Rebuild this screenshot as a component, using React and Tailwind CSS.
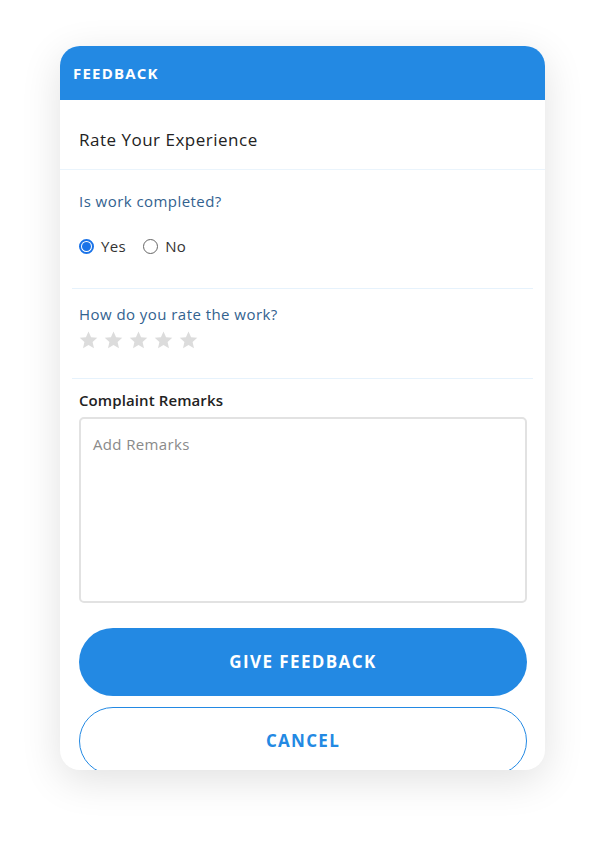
import React from "react";

function Star() {
  return (
    <svg width="21" height="20" viewBox="0 0 24 24" className="block">
      <path
        d="M12 1.8l3.1 6.9 7.4.7-5.6 5 1.7 7.4L12 17.9l-6.6 3.9 1.7-7.4-5.6-5 7.4-.7z"
        fill="#dcdcdc"
      />
    </svg>
  );
}

const font = "'Open Sans', 'Noto Sans', sans-serif";

export default function App() {
  return (
    <div
      className="w-[606px] h-[846px] bg-white pt-[46px] pl-[60px]"
      style={{ fontFamily: font }}
    >
      <div className="w-[485px] h-[724px] bg-white rounded-[20px] overflow-hidden shadow-[0_10px_40px_rgba(0,0,0,0.12)] flex flex-col">
        <div className="h-[54px] bg-[#2389e3] flex items-center pl-[13px] shrink-0">
          <span className="text-white font-bold text-[15px] tracking-[1.2px]">FEEDBACK</span>
        </div>
        <div className="h-[70px] flex items-center pl-[19px] pt-[10px] border-b border-[#eaf4fc] shrink-0">
          <span className="text-[17px] text-[#222] tracking-[0.5px]">Rate Your Experience</span>
        </div>
        <div className="px-[12px]">
          <div className="px-[7px] pt-[21px] pb-[32px] border-b border-[#e6f2fc]">
            <div className="text-[15px] text-[#33628f] leading-[20px] tracking-[0.45px]">Is work completed?</div>
            <div className="flex items-center mt-[25px] h-[20px] text-[15px] text-[#333] tracking-[0.4px]">
              <span className="w-[15px] h-[15px] rounded-full border-2 border-[#1a73e8] flex items-center justify-center">
                <span className="w-[9px] h-[9px] rounded-full bg-[#1a73e8]" />
              </span>
              <span className="ml-[7px]">Yes</span>
              <span className="ml-[17px] w-[15px] h-[15px] rounded-full border border-[#666]" />
              <span className="ml-[7px]">No</span>
            </div>
          </div>
          <div className="px-[7px] pt-[15px] pb-[28px] border-b border-[#e6f2fc]">
            <div className="text-[15px] text-[#33628f] leading-[20px] tracking-[0.45px]">How do you rate the work?</div>
            <div className="flex gap-[4px] mt-[6px] -ml-[1px]">
              <Star />
              <Star />
              <Star />
              <Star />
              <Star />
            </div>
          </div>
          <div className="px-[7px] pt-[11px]">
            <div className="text-[15px] text-[#222] font-semibold leading-[20px] tracking-[0.1px]">Complaint Remarks</div>
            <textarea
              placeholder="Add Remarks"
              className="mt-[7px] block w-[448px] h-[186px] border-2 border-[#e2e2e2] rounded-[5px] px-[12px] py-[14px] text-[15px] tracking-[0.35px] placeholder-[#8a8a8a] outline-none resize-none"
              style={{ fontFamily: font }}
            />
            <button className="mt-[25px] w-[448px] h-[68px] rounded-full bg-[#2389e3] text-white font-bold text-[17px] tracking-[1.4px]">
              GIVE FEEDBACK
            </button>
            <button className="mt-[11px] w-[448px] h-[68px] rounded-full border border-[#2389e3] text-[#2389e3] font-bold text-[17px] tracking-[1.3px]">
              CANCEL
            </button>
          </div>
        </div>
      </div>
    </div>
  );
}
